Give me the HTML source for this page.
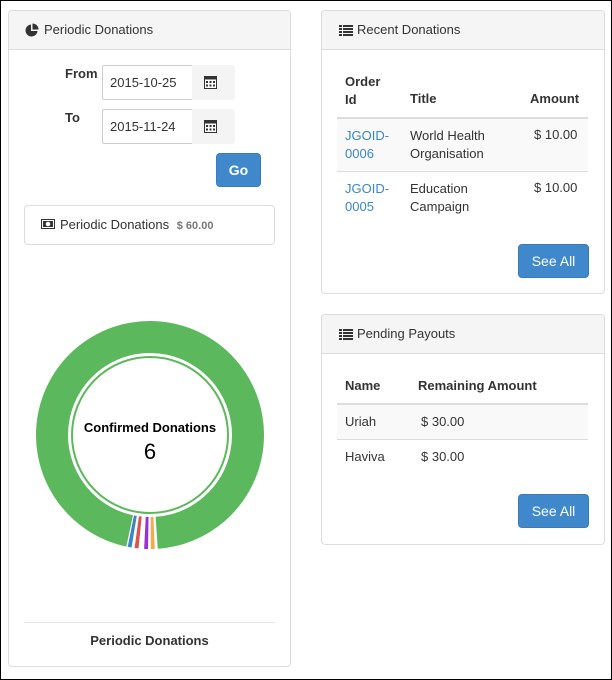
<!DOCTYPE html>
<html><head><meta charset="utf-8"><style>
*{box-sizing:border-box;margin:0;padding:0}
body{width:612px;height:680px;background:#fff;font-family:"Liberation Sans",sans-serif;font-size:13px;color:#333;position:relative;overflow:hidden}
.frame{position:absolute;left:0;top:0;width:612px;height:680px;border:1px solid #000}
.a{position:absolute}
.panel{position:absolute;border:1px solid #ddd;border-radius:4px;background:#fff}
.ph{position:absolute;left:0;right:0;top:0;height:39px;background:#f5f5f5;border-bottom:1px solid #ddd;border-radius:3px 3px 0 0}
.pt{position:absolute;top:11px;left:35px;font-size:13px}
.inp{position:absolute;border:1px solid #ccc;background:#fff;padding-left:7px;line-height:33px;border-radius:2px 0 0 2px}
.add{position:absolute;background:#f4f4f4;border-radius:0 3px 3px 0}
.btn{position:absolute;background:#3f88cc;border:1px solid #3a7bbd;border-radius:4px;color:#fff;text-align:center}
b{font-weight:bold}
.link{color:#3a87c8}
.hl{position:absolute;height:2px;background:#ddd}
.l{position:absolute;height:1px;background:#ddd}
</style></head><body>
<div class="frame"></div>
<!-- left panel -->
<div class="panel" style="left:8px;top:10px;width:283px;height:657px">
 <div class="ph"><svg class="a" style="left:16px;top:12px" width="14" height="14" viewBox="0 0 14 14"><path d="M6 1.5A6 6 0 1 0 12.5 8H6z" fill="#333"/><path d="M7.5 0.5V6.5H13.5A6 6 0 0 0 7.5 0.5z" fill="#333"/></svg><span class="pt">Periodic Donations</span></div>
</div>
<div class="a" style="left:65px;top:66px;font-weight:bold">From</div>
<div class="inp" style="left:102px;top:65px;width:91px;height:35px">2015-10-25</div>
<div class="add" style="left:192px;top:65px;width:43px;height:35px"><svg class="a" style="left:12px;top:10px" width="13" height="14" viewBox="0 0 13 14"><rect x="0.5" y="1.5" width="12" height="12" fill="#fff" stroke="#333"/><rect x="0.5" y="1.5" width="12" height="3" fill="#333"/><g fill="#333"><rect x="2" y="6" width="2" height="2"/><rect x="5.5" y="6" width="2" height="2"/><rect x="9" y="6" width="2" height="2"/><rect x="2" y="9.5" width="2" height="2"/><rect x="5.5" y="9.5" width="2" height="2"/><rect x="9" y="9.5" width="2" height="2"/></g></svg></div>
<div class="a" style="left:65px;top:110px;font-weight:bold">To</div>
<div class="inp" style="left:102px;top:109px;width:91px;height:35px">2015-11-24</div>
<div class="add" style="left:192px;top:109px;width:43px;height:35px"><svg class="a" style="left:12px;top:10px" width="13" height="14" viewBox="0 0 13 14"><rect x="0.5" y="1.5" width="12" height="12" fill="#fff" stroke="#333"/><rect x="0.5" y="1.5" width="12" height="3" fill="#333"/><g fill="#333"><rect x="2" y="6" width="2" height="2"/><rect x="5.5" y="6" width="2" height="2"/><rect x="9" y="6" width="2" height="2"/><rect x="2" y="9.5" width="2" height="2"/><rect x="5.5" y="9.5" width="2" height="2"/><rect x="9" y="9.5" width="2" height="2"/></g></svg></div>
<div class="btn" style="left:216px;top:153px;width:45px;height:34px;line-height:32px;font-weight:bold;font-size:14px">Go</div>
<div class="a" style="left:24px;top:205px;width:251px;height:40px;border:1px solid #ddd;border-radius:4px">
 <svg class="a" style="left:16px;top:13px" width="14" height="10" viewBox="0 0 14 10"><rect x="0.5" y="0.5" width="13" height="9" fill="#fff" stroke="#333"/><rect x="2" y="2" width="10" height="6" fill="#333"/><circle cx="7" cy="5" r="2.3" fill="#fff"/></svg>
 <span class="a" style="left:35px;top:11px">Periodic Donations <b style="font-size:11px;color:#777;margin-left:4px">$ 60.00</b></span>
</div>
<svg class="a" style="left:0;top:0" width="300" height="600">
 <circle cx="150" cy="435" r="98" fill="none" stroke="#5cb85c" stroke-width="32" stroke-dasharray="588.3 1000" transform="rotate(102 150 435)"/>
 <circle cx="150" cy="435" r="98" fill="none" stroke="#3a87c8" stroke-width="32" stroke-dasharray="3.4 1000" transform="rotate(99.3 150 435)"/>
 <circle cx="150" cy="435" r="98" fill="none" stroke="#d9534f" stroke-width="32" stroke-dasharray="3.4 1000" transform="rotate(95.8 150 435)"/>
 <circle cx="150" cy="435" r="98" fill="none" stroke="#9b30d9" stroke-width="32" stroke-dasharray="3.4 1000" transform="rotate(91 150 435)"/>
 <circle cx="150" cy="435" r="98" fill="none" stroke="#f0ad4e" stroke-width="32" stroke-dasharray="3.4 1000" transform="rotate(87.6 150 435)"/>
 <circle cx="150" cy="435" r="78" fill="none" stroke="#5cb85c" stroke-width="2"/>
</svg>
<div class="a" style="left:60px;top:420px;width:180px;text-align:center;font-weight:bold;color:#000">Confirmed Donations</div>
<div class="a" style="left:60px;top:439px;width:180px;text-align:center;font-size:22px;color:#000">6</div>
<div class="l" style="left:24px;top:622px;width:251px;background:#e5e5e5"></div>
<div class="a" style="left:24px;top:633px;width:251px;text-align:center;font-weight:bold">Periodic Donations</div>

<!-- recent donations -->
<div class="panel" style="left:321px;top:10px;width:284px;height:284px">
 <div class="ph"><svg class="a" style="left:17px;top:14px" width="14" height="11" viewBox="0 0 14 11"><g fill="#333"><rect x="0" y="0" width="3" height="2"/><rect x="4" y="0" width="10" height="2"/><rect x="0" y="3" width="3" height="2"/><rect x="4" y="3" width="10" height="2"/><rect x="0" y="6" width="3" height="2"/><rect x="4" y="6" width="10" height="2"/><rect x="0" y="9" width="3" height="2"/><rect x="4" y="9" width="10" height="2"/></g></svg><span class="pt">Recent Donations</span></div>
</div>
<div class="a" style="left:345px;top:73px;font-weight:bold;line-height:18px">Order<br>Id</div>
<div class="a" style="left:410px;top:91px;font-weight:bold">Title</div>
<div class="a" style="left:530px;top:91px;font-weight:bold">Amount</div>
<div class="hl" style="left:337px;top:117px;width:251px"></div>
<div class="a" style="left:337px;top:119px;width:251px;height:52px;background:#f9f9f9"></div>
<div class="a link" style="left:345px;top:127px;line-height:18px">JGOID-<br>0006</div>
<div class="a" style="left:410px;top:127px;line-height:18px">World Health<br>Organisation</div>
<div class="a" style="left:534px;top:127px">$ 10.00</div>
<div class="l" style="left:337px;top:171px;width:251px"></div>
<div class="a link" style="left:345px;top:180px;line-height:18px">JGOID-<br>0005</div>
<div class="a" style="left:410px;top:180px;line-height:18px">Education<br>Campaign</div>
<div class="a" style="left:534px;top:180px">$ 10.00</div>
<div class="btn" style="left:518px;top:244px;width:71px;height:34px;line-height:32px;font-size:14px">See All</div>

<!-- pending payouts -->
<div class="panel" style="left:321px;top:314px;width:284px;height:231px">
 <div class="ph"><svg class="a" style="left:17px;top:14px" width="14" height="11" viewBox="0 0 14 11"><g fill="#333"><rect x="0" y="0" width="3" height="2"/><rect x="4" y="0" width="10" height="2"/><rect x="0" y="3" width="3" height="2"/><rect x="4" y="3" width="10" height="2"/><rect x="0" y="6" width="3" height="2"/><rect x="4" y="6" width="10" height="2"/><rect x="0" y="9" width="3" height="2"/><rect x="4" y="9" width="10" height="2"/></g></svg><span class="pt">Pending Payouts</span></div>
</div>
<div class="a" style="left:345px;top:378px;font-weight:bold">Name</div>
<div class="a" style="left:418px;top:378px;font-weight:bold">Remaining Amount</div>
<div class="hl" style="left:337px;top:403px;width:251px"></div>
<div class="a" style="left:337px;top:405px;width:251px;height:34px;background:#f9f9f9"></div>
<div class="a" style="left:345px;top:414px">Uriah</div>
<div class="a" style="left:421px;top:414px">$ 30.00</div>
<div class="l" style="left:337px;top:439px;width:251px"></div>
<div class="a" style="left:345px;top:449px">Haviva</div>
<div class="a" style="left:421px;top:449px">$ 30.00</div>
<div class="btn" style="left:518px;top:494px;width:71px;height:34px;line-height:32px;font-size:14px">See All</div>
</body></html>
